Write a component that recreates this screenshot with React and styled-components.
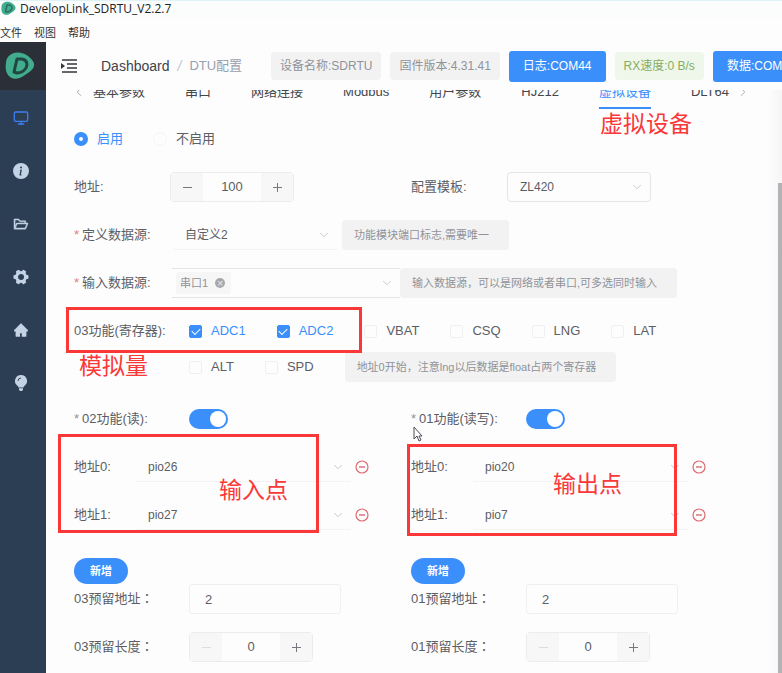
import { useState } from "react";
import styled, { createGlobalStyle, css } from "styled-components";
import { AiFillHome, AiOutlineFolderOpen } from "react-icons/ai";
import { BsInfoCircleFill } from "react-icons/bs";
import { ChevronDown, ChevronLeft, ChevronRight, Monitor } from "lucide-react";

const COLORS = {
  PRIMARY: "#3a8ffb",
  TEXT: "#5c5e63",
  MUTED: "#909399",
  BORDER: "#e4e5ea",
  SOFT: "#f2f2f3",
  NOTE: "#fa3838",
  SIDEBAR: "#2c3e53",
};

const TABS = [
  "基本参数",
  "串口",
  "网络连接",
  "Modbus",
  "用户参数",
  "HJ212",
  "虚拟设备",
  "DLT64",
];

const BulbIcon = ({ size }) => (
  <svg width={size} height={size} viewBox="0 0 16 16" aria-hidden="true">
    <path
      d="M8 0a6 6 0 0 0-3.6 10.8c.6.5 1 1 1.1 1.7h5c.1-.7.5-1.2 1.1-1.7A6 6 0 0 0 8 0z"
      fill="currentColor"
    />
    <path d="M6 13.200h4v1.300L9 16H7l-1-1.500z" fill="currentColor" />
    <path
      d="M5 6a3 3 0 0 1 3-3"
      fill="none"
      stroke={COLORS.SIDEBAR}
      strokeWidth="0.9"
    />
  </svg>
);

const GearIcon = ({ size }) => (
  <svg width={size} height={size} viewBox="0 0 16 16" aria-hidden="true">
    <circle
      cx="8"
      cy="8"
      r="4.5"
      fill="none"
      stroke="currentColor"
      strokeWidth="3"
    />
    {[30, 90, 150, 210, 270, 330].map((angle) => (
      <rect
        key={angle}
        x="6"
        y="0.5"
        width="4"
        height="3"
        rx="1"
        fill="currentColor"
        transform={`rotate(${angle} 8 8)`}
      />
    ))}
  </svg>
);

const NAV_ITEMS = [
  { label: "Dashboard", icon: Monitor, active: true },
  { label: "Info", icon: BsInfoCircleFill },
  { label: "Files", icon: AiOutlineFolderOpen, bold: true },
  { label: "Settings", icon: GearIcon },
  { label: "Home", icon: AiFillHome },
  { label: "Tips", icon: BulbIcon },
];

const Logo = ({ size, dark }) => (
  <svg width={size} height={size} viewBox="0 0 30 30" aria-hidden="true">
    <path
      d="M5 4C10 0 18 1 23 5c4 3 7 7 6 10-1 4-5 6-9 9-5 4-11 5-15 2C1 23 0 17 1 12c0-3 1-6 4-8z"
      fill="#41ad8e"
    />
    <path
      d="M12 8h5c5 1 6 5 4 9-2 3-5 5-9 5l-3-1z"
      fill="none"
      stroke={dark}
      strokeWidth="3"
      strokeLinejoin="round"
    />
  </svg>
);

const FoldIcon = () => (
  <svg width="16" height="14" viewBox="0 0 16 14" aria-hidden="true">
    <path
      d="M1 1h15M6 5h10M6 9h10M1 13h15"
      stroke="#33363b"
      strokeWidth="1.6"
    />
    <path d="M0 4l4 3-4 3z" fill="#33363b" />
  </svg>
);

const RemoveIcon = () => (
  <svg width="14" height="14" viewBox="0 0 14 14" aria-hidden="true">
    <circle cx="7" cy="7" r="6" fill="none" stroke="#dd6b70" strokeWidth="1.2" />
    <path d="M4 7h6" stroke="#dd6b70" strokeWidth="1.4" />
  </svg>
);

const Dropdown = ({ id, label, options, ...props }) => (
  <SelectWrapper {...props}>
    <StyledSelect id={id} aria-label={label}>
      {options.map((option) => (
        <option key={option}>{option}</option>
      ))}
    </StyledSelect>
    <ChevronDown size={14} strokeWidth={1.3} />
  </SelectWrapper>
);

const Stepper = ({ id, initial, muted }) => {
  const [value, setValue] = useState(initial);

  return (
    <StepperWrapper>
      <StepButton
        type="button"
        aria-label="减少"
        $muted={muted}
        onClick={() => setValue(Math.max(0, value - 1))}
      >
        <svg width="11" height="11" viewBox="0 0 11 11">
          <path d="M1 5.5h9" stroke="currentColor" />
        </svg>
      </StepButton>
      <StepInput
        id={id}
        value={value}
        onChange={(e) => setValue(Number(e.target.value) || 0)}
      />
      <StepButton
        type="button"
        aria-label="增加"
        onClick={() => setValue(value + 1)}
      >
        <svg width="11" height="11" viewBox="0 0 11 11">
          <path d="M1 5.5h9M5.5 1v9" stroke="currentColor" />
        </svg>
      </StepButton>
    </StepperWrapper>
  );
};

const Check = ({ label, defaultChecked }) => (
  <CheckLabel>
    <CheckInput type="checkbox" defaultChecked={defaultChecked} />
    <span>{label}</span>
  </CheckLabel>
);

const PinGroup = ({ code, title, pins, children }) => (
  <section>
    <Field>
      <Label htmlFor={`switch-${code}`} $width={115}>
        <Star $muted>*</Star>
        {title}
      </Label>
      <Switch id={`switch-${code}`} type="checkbox" role="switch" defaultChecked />
    </Field>
    <PinList>
      {pins.map((pin, idx) => (
        <Field key={pin}>
          <Label htmlFor={`pin-${code}-${idx}`} $width={61}>
            地址{idx}:
          </Label>
          <Dropdown id={`pin-${code}-${idx}`} options={[pin]} $width={217} $plain />
          <RemoveButton type="button" aria-label="删除">
            <RemoveIcon />
          </RemoveButton>
        </Field>
      ))}
      {children}
    </PinList>
    <AddButton type="button">新增</AddButton>
    <Field>
      <Label htmlFor={`address-${code}`} $width={115}>
        {code}预留地址<Colon>：</Colon>
      </Label>
      <TextInput id={`address-${code}`} defaultValue="2" />
    </Field>
    <Field>
      <Label htmlFor={`length-${code}`} $width={115}>
        {code}预留长度<Colon>：</Colon>
      </Label>
      <Stepper id={`length-${code}`} initial={0} muted />
    </Field>
  </section>
);

export default function App() {
  return (
    <>
      <GlobalStyle />
      <Window>
        <TitleBar>
          <Logo size={15} dark="#2a6f62" />
          <span>DevelopLink_SDRTU_V2.2.7</span>
        </TitleBar>
        <MenuBar>
          <MenuButton type="button">文件</MenuButton>
          <MenuButton type="button">视图</MenuButton>
          <MenuButton type="button">帮助</MenuButton>
        </MenuBar>
        <Body>
          <Sidebar>
            <LogoCell>
              <Logo size={30} dark="#21463f" />
            </LogoCell>
            {NAV_ITEMS.map(({ label, icon: Icon, active, bold }) => (
              <NavLink
                key={label}
                href="#"
                aria-label={label}
                $active={active}
                $bold={bold}
              >
                <Icon size={16} />
              </NavLink>
            ))}
          </Sidebar>
          <Main>
            <Header>
              <FoldButton type="button" aria-label="折叠">
                <FoldIcon />
              </FoldButton>
              <Breadcrumb>
                <a href="#">Dashboard</a>
                <i>/</i>
                <span>DTU配置</span>
              </Breadcrumb>
              <Chips>
                <Chip>设备名称:SDRTU</Chip>
                <Chip>固件版本:4.31.41</Chip>
                <PortButton type="button">日志:COM44</PortButton>
                <Chip $success>RX速度:0 B/s</Chip>
                <PortButton type="button">数据:COM44</PortButton>
              </Chips>
            </Header>
            <Scroller>
              <Content>
                <TabBar>
                  <ChevronLeft size={14} strokeWidth={1.3} />
                  <TabList role="tablist">
                    {TABS.map((tab) => (
                      <Tab
                        key={tab}
                        type="button"
                        role="tab"
                        aria-selected={tab === "虚拟设备"}
                      >
                        {tab}
                        {tab === "虚拟设备" && <TabNote>虚拟设备</TabNote>}
                      </Tab>
                    ))}
                  </TabList>
                  <ChevronRight size={14} strokeWidth={1.3} />
                </TabBar>
                <Form>
                  <Field>
                    <RadioLabel>
                      <RadioInput type="radio" name="enabled" defaultChecked />
                      <span>启用</span>
                    </RadioLabel>
                    <RadioLabel>
                      <RadioInput type="radio" name="enabled" />
                      <span>不启用</span>
                    </RadioLabel>
                  </Field>
                  <Columns>
                    <Field>
                      <Label htmlFor="address" $width={96}>
                        地址:
                      </Label>
                      <Stepper id="address" initial={100} />
                    </Field>
                    <Field>
                      <Label htmlFor="template" $width={96}>
                        配置模板:
                      </Label>
                      <Dropdown id="template" options={["ZL420"]} $width={144} />
                    </Field>
                  </Columns>
                  <Field>
                    <Label htmlFor="source" $width={98}>
                      <Star>*</Star>
                      定义数据源:
                    </Label>
                    <Dropdown id="source" options={["自定义2"]} $width={166} $plain />
                    <Hint>功能模块端口标志,需要唯一</Hint>
                  </Field>
                  <Field>
                    <Label htmlFor="input-source" $width={98}>
                      <Star>*</Star>
                      输入数据源:
                    </Label>
                    <TagSelect>
                      <Tag>
                        串口1
                        <TagClose type="button" aria-label="移除">
                          ×
                        </TagClose>
                      </Tag>
                      <Dropdown id="input-source" options={[""]} $bare />
                    </TagSelect>
                    <Hint>输入数据源，可以是网络或者串口,可多选同时输入</Hint>
                  </Field>
                  <RegisterField>
                    <Label as="span" $width={115}>
                      03功能(寄存器):
                    </Label>
                    <CheckLines>
                      <CheckLine>
                        <Check label="ADC1" defaultChecked />
                        <Check label="ADC2" defaultChecked />
                        <Check label="VBAT" />
                        <Check label="CSQ" />
                        <Check label="LNG" />
                        <Check label="LAT" />
                      </CheckLine>
                      <CheckLine>
                        <Check label="ALT" />
                        <Check label="SPD" />
                        <Hint>地址0开始，注意lng以后数据是float占两个寄存器</Hint>
                      </CheckLine>
                    </CheckLines>
                    <NoteFrame $left={-8} $top={-9} $width={296} $height={46} />
                    <NoteText $left={5} $top={34}>
                      模拟量
                    </NoteText>
                  </RegisterField>
                  <Columns>
                    <PinGroup code="03" title="02功能(读):" pins={["pio26", "pio27"]}>
                      <NoteFrame $left={-16} $top={-18} $width={261} $height={99} />
                      <NoteText $left={145} $top={22}>
                        输入点
                      </NoteText>
                    </PinGroup>
                    <PinGroup code="01" title="01功能(读写):" pins={["pio20", "pio7"]}>
                      <NoteFrame $left={-4} $top={-8} $width={270} $height={92} />
                      <NoteText $left={142} $top={16}>
                        输出点
                      </NoteText>
                      <Pointer width="10" height="16" viewBox="0 0 10 16">
                        <path
                          d="M1 1v12l3-3 2 5 2-1-2-4h3z"
                          fill="#fff"
                          stroke="#4a4d55"
                        />
                      </Pointer>
                    </PinGroup>
                  </Columns>
                </Form>
              </Content>
              <ScrollTrack>
                <ScrollThumb />
              </ScrollTrack>
            </Scroller>
          </Main>
        </Body>
      </Window>
    </>
  );
}

const GlobalStyle = createGlobalStyle`
  * {
    box-sizing: border-box;
  }

  body {
    margin: 0;
    background: #fdfdfe;
    color: ${COLORS.TEXT};
    font: 13px/20px "Liberation Sans", "Noto Sans CJK SC", sans-serif;
  }

  button,
  input,
  select {
    margin: 0;
    padding: 0;
    border: 0;
    background: none;
    color: inherit;
    font: inherit;
  }

  a {
    color: inherit;
    text-decoration: none;
  }
`;

const Window = styled.div`
  display: flex;
  flex-direction: column;
  height: 100vh;
  overflow: hidden;
`;

const TitleBar = styled.div`
  display: flex;
  align-items: center;
  gap: 4px;
  height: 18px;
  padding-left: 1px;
  padding-bottom: 2px;
  background: #fbfdfd;
  border-top: 1px solid #dff2f7;
  color: #222;
  font: 12px/16px "Open Sans", sans-serif;
`;

const MenuBar = styled.div`
  display: flex;
  align-items: center;
  gap: 12px;
  height: 24px;
  padding-top: 5px;
`;

const MenuButton = styled.button`
  color: #333;
  font-size: 11px;
`;

const Body = styled.div`
  display: flex;
  flex: 1;
  min-height: 0;
`;

const Sidebar = styled.nav`
  flex: none;
  width: 46px;
  background: ${COLORS.SIDEBAR};
`;

const LogoCell = styled.div`
  display: flex;
  align-items: center;
  justify-content: center;
  height: 48px;
  margin-bottom: 1px;
  padding-right: 6px;
  background: #2a2f38;
`;

const NavLink = styled.a`
  display: flex;
  align-items: center;
  justify-content: center;
  height: 53px;
  padding-right: 4px;
  color: ${({ $active }) => ($active ? "#3f7df0" : "#c3d2e4")};

  ${({ $bold }) =>
    $bold &&
    css`
      svg {
        stroke: currentColor;
        stroke-width: 3%;
      }
    `}
`;

const Main = styled.main`
  display: flex;
  flex: 1;
  flex-direction: column;
  min-width: 0;
`;

const Header = styled.header`
  display: flex;
  flex: none;
  align-items: center;
  height: 48px;
  padding-left: 15px;
  overflow: hidden;
`;

const FoldButton = styled.button`
  display: flex;
  cursor: pointer;
`;

const Breadcrumb = styled.div`
  display: flex;
  flex: none;
  gap: 8px;
  width: 194px;
  padding-left: 24px;
  color: #404348;
  font-size: 14px;

  i {
    color: #c0c4cc;
  }

  span {
    color: #97a0b0;
    font-size: 13px;
  }
`;

const Chips = styled.div`
  display: flex;
  flex: none;
  align-items: center;
  gap: 9px;
  font-size: 12px;
`;

const Chip = styled.span`
  padding: 4px 9px;
  border-radius: 4px;
  background: ${({ $success }) => ($success ? "#eff7ea" : COLORS.SOFT)};
  color: ${({ $success }) => ($success ? "#85ad66" : COLORS.MUTED)};
`;

const PortButton = styled.button`
  height: 31px;
  padding: 0 14px;
  border-radius: 3px;
  background: ${COLORS.PRIMARY};
  color: #fff;
  cursor: pointer;
`;

const Scroller = styled.div`
  display: flex;
  flex: 1;
  min-height: 0;
  overflow: hidden;
`;

const Content = styled.div`
  flex: 1;
  min-width: 0;
  margin-top: -20px;
  clip-path: inset(19px 0 0);
`;

const TabBar = styled.div`
  display: flex;
  align-items: center;
  height: 39px;
  padding: 0 18px 0 26px;
  color: ${COLORS.MUTED};

  > svg {
    flex: none;
    margin-top: 5px;
  }
`;

const TabList = styled.div`
  display: flex;
  flex: 1;
  gap: 40px;
  min-width: 0;
  padding-left: 7px;
`;

const Tab = styled.button`
  position: relative;
  flex: none;
  height: 39px;
  padding-top: 6px;
  border-bottom: 2px solid transparent;
  color: #43464b;
  cursor: pointer;

  &[aria-selected="true"] {
    border-color: ${COLORS.PRIMARY};
    color: ${COLORS.PRIMARY};
  }
`;

const Form = styled.form`
  padding: 15px 20px 0 28px;
`;

const Field = styled.div`
  display: flex;
  align-items: center;
  height: 30px;
  margin-bottom: 18px;
`;

const RegisterField = styled.div`
  position: relative;
  display: flex;
  margin-bottom: 22px;
`;

const Columns = styled.div`
  display: grid;
  grid-template-columns: 1fr 1fr;
`;

const Label = styled.label`
  flex: none;
  width: ${({ $width }) => $width}px;
  line-height: 30px;
  white-space: nowrap;
`;

const Colon = styled.span`
  font-family: "Noto Sans CJK TC", sans-serif;
  line-height: 20px;
`;

const Star = styled.span`
  margin-right: 3px;
  color: ${({ $muted }) => ($muted ? COLORS.MUTED : "#e08080")};
`;

const RadioLabel = styled.label`
  display: flex;
  align-items: center;
  gap: 9px;
  margin-right: 30px;

  &:has(input:checked) {
    color: ${COLORS.PRIMARY};
  }
`;

const RadioInput = styled.input`
  appearance: none;
  width: 14px;
  height: 14px;
  border: 1px solid #f6f6f6;
  border-radius: 50%;

  &:checked {
    border: 5px solid ${COLORS.PRIMARY};
  }
`;

const SelectWrapper = styled.div`
  display: flex;
  flex: ${({ $width }) => ($width ? "none" : 1)};
  align-items: center;
  width: ${({ $width }) => $width}px;
  height: 30px;
  border: 1px solid ${COLORS.BORDER};
  border-radius: 4px;

  ${({ $plain }) =>
    $plain &&
    css`
      border-color: transparent transparent #f3f3f5;
    `}

  ${({ $bare }) =>
    $bare &&
    css`
      border: 0;
    `}

  > svg {
    flex: none;
    margin-left: -20px;
    margin-right: 6px;
    color: #b4b8c0;
    pointer-events: none;
  }
`;

const StyledSelect = styled.select`
  flex: 1;
  min-width: 0;
  height: 28px;
  padding: 0 22px 0 12px;
  appearance: none;
  font-size: 12px;
`;

const TagSelect = styled.div`
  display: flex;
  align-items: center;
  width: 228px;
  height: 30px;
  padding-left: 4px;
  border: 1px solid ${COLORS.BORDER};
  border-width: 1px 0;
`;

const Tag = styled.span`
  display: flex;
  align-items: center;
  gap: 7px;
  height: 22px;
  padding: 0 6px 0 4px;
  border-radius: 3px;
  background: #f6f6f7;
  color: ${COLORS.MUTED};
  font-size: 11px;
`;

const TagClose = styled.button`
  width: 10px;
  height: 10px;
  border-radius: 50%;
  background: #a6a8ad;
  color: #e8e8ea;
  line-height: 10px;
`;

const Hint = styled.span`
  padding: 0 20px 0 12px;
  border-radius: 4px;
  background: ${COLORS.SOFT};
  color: ${COLORS.MUTED};
  font-size: 11px;
  line-height: 30px;
  white-space: nowrap;

  ${Field} > & {
    margin-left: 4px;
  }

  ${TagSelect} + & {
    margin-left: 0;
  }
`;

const StepperWrapper = styled.div`
  display: flex;
  width: 124px;
  height: 30px;
  border: 1px solid #ebecef;
  border-radius: 4px;
`;

const StepButton = styled.button`
  display: flex;
  flex: none;
  align-items: center;
  justify-content: center;
  width: 32px;
  background: #f7f7f8;
  color: ${({ $muted }) => ($muted ? "#dcdde0" : "#75787e")};
`;

const StepInput = styled.input`
  flex: 1;
  min-width: 0;
  text-align: center;
`;

const CheckLines = styled.div`
  display: flex;
  flex-direction: column;
  gap: 6px;
`;

const CheckLine = styled.div`
  display: flex;
  align-items: center;
  gap: 31px;
  height: 30px;
`;

const CheckLabel = styled.label`
  display: flex;
  align-items: center;
  gap: 9px;

  &:has(input:checked) {
    color: ${COLORS.PRIMARY};
  }
`;

const CheckInput = styled.input`
  appearance: none;
  display: grid;
  place-items: center;
  width: 13px;
  height: 13px;
  border: 1px solid #f0f0f3;
  border-radius: 2px;

  &:checked {
    border-color: ${COLORS.PRIMARY};
    background: ${COLORS.PRIMARY};
  }

  &:checked::after {
    content: "";
    width: 7px;
    height: 4px;
    margin-bottom: 2px;
    border: solid #fff;
    border-width: 0 0 1px 1px;
    transform: rotate(-45deg);
  }
`;

const Switch = styled.input`
  appearance: none;
  width: 39px;
  height: 20px;
  padding: 2px;
  border-radius: 10px;
  background: #dcdfe6;

  &::after {
    content: "";
    display: block;
    width: 16px;
    height: 16px;
    border-radius: 50%;
    background: #fff;
  }

  &:checked {
    background: ${COLORS.PRIMARY};
  }

  &:checked::after {
    margin-left: auto;
  }
`;

const PinList = styled.div`
  position: relative;
`;

const RemoveButton = styled.button`
  display: flex;
  margin-left: 3px;
  cursor: pointer;
`;

const AddButton = styled.button`
  display: block;
  width: 54px;
  height: 26px;
  margin-top: 28px;
  border-radius: 13px;
  background: ${COLORS.PRIMARY};
  color: #fff;
  font-size: 11px;
  font-weight: 700;
  cursor: pointer;
`;

const TextInput = styled.input`
  width: 152px;
  height: 30px;
  padding: 0 15px;
  border: 1px solid #f0f0f3;
  border-radius: 3px;
`;

const noteText = css`
  color: ${COLORS.NOTE};
  font-size: 23px;
  line-height: 32px;
  white-space: nowrap;
`;

const TabNote = styled.span`
  position: absolute;
  top: 38px;
  left: 1px;
  ${noteText}
`;

const NoteText = styled.span`
  position: absolute;
  top: ${({ $top }) => $top}px;
  left: ${({ $left }) => $left}px;
  pointer-events: none;
  ${noteText}
`;

const NoteFrame = styled.div`
  position: absolute;
  top: ${({ $top }) => $top}px;
  left: ${({ $left }) => $left}px;
  width: ${({ $width }) => $width}px;
  height: ${({ $height }) => $height}px;
  border: 3px solid ${COLORS.NOTE};
  pointer-events: none;
`;

const Pointer = styled.svg`
  position: absolute;
  top: -26px;
  left: 2px;
`;

const ScrollTrack = styled.div`
  display: flex;
  justify-content: flex-end;
  flex: none;
  width: 14px;
  padding-top: 93px;
  background: linear-gradient(90deg, #fdfdfe, #f5f5f7);
`;

const ScrollThumb = styled.div`
  width: 4px;
  background: #b3b3b5;
`;
